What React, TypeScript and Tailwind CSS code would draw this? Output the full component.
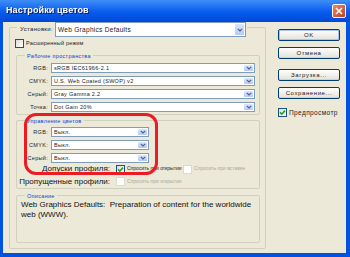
import React from 'react';

const font = "font-['Liberation_Sans','Noto_Sans',sans-serif]";

function Chevron() {
  return (
    <svg width="6" height="4" viewBox="0 0 6 4">
      <path d="M0.8 0.8 L3 3 L5.2 0.8" fill="none" stroke="#4d6185" strokeWidth="1.2" />
    </svg>
  );
}

function Select({ value, h = 'h-[10px]', w = 'flex-1', text = 'text-[5.5px]' }: { value: string; h?: string; w?: string; text?: string }) {
  return (
    <div className={`${w} ${h} flex items-stretch bg-white border border-[#7f9db9]`}>
      <span className={`flex-1 flex items-center pl-[2px] ${text} tracking-[0.3px] text-[#222] whitespace-nowrap overflow-hidden`}>{value}</span>
      <span className="w-[9px] m-px rounded-[1px] bg-gradient-to-b from-[#dce6fd] to-[#b3c9f7] flex items-center justify-center">
        <Chevron />
      </span>
    </div>
  );
}

function Check({ checked = false, disabled = false }: { checked?: boolean; disabled?: boolean }) {
  return (
    <span
      className={`w-[9px] h-[9px] shrink-0 flex items-center justify-center border ${
        disabled ? 'border-[#dcdad0] bg-white' : 'border-[#1c5180] bg-gradient-to-br from-[#dcdcd6] to-white'
      }`}
    >
      {checked && (
        <svg width="7" height="7" viewBox="0 0 7 7">
          <path d="M1 3.4 L2.8 5.2 L6 1.6" fill="none" stroke="#21a121" strokeWidth="1.6" />
        </svg>
      )}
    </span>
  );
}

function Group({ title, children, className = '' }: { title: string; children?: React.ReactNode; className?: string }) {
  return (
    <div className={`border border-[#d0d0bf] rounded-[2px] ${className}`}>
      <div className="-mt-[4px] ml-[8px] w-fit px-[2px] bg-[#ece9d8] h-[8px] leading-[8px] text-[5.5px] tracking-[0.3px] text-[#0046d5]">
        {title}
      </div>
      {children}
    </div>
  );
}

function Row({ label, value, w }: { label: string; value: string; w?: string }) {
  return (
    <div className="flex items-center h-[10px]">
      <span className="w-[32px] text-right text-[5.5px] tracking-[0.3px] text-[#222] pr-[1px]">{label}</span>
      <span className="w-[2px]" />
      <Select value={value} w={w} />
    </div>
  );
}

function Button({ children, primary = false }: { children: React.ReactNode; primary?: boolean }) {
  return (
    <button
      className={`h-[12px] w-[62px] rounded-[2px] border border-[#003c74] bg-gradient-to-b from-white to-[#e3e1d6] text-[6px] tracking-[0.6px] text-[#222] flex items-center justify-center ${
        primary ? 'shadow-[inset_0_0_0_1px_#a9c4f4]' : 'shadow-[inset_0_-1px_0_#d6d0c5]'
      }`}
    >
      {children}
    </button>
  );
}

export default function App() {
  return (
    <div className={`w-[350px] h-[257px] flex flex-col bg-[#0053e1] relative overflow-hidden ${font}`}>
      {/* Title bar */}
      <div className="h-[22px] flex items-center pl-[6px] pr-[4px] bg-gradient-to-b from-[#3e8ef6] via-[#0a5ef0] to-[#0048d6]">
        <span className="text-white font-bold text-[9px] tracking-[0.1px] drop-shadow-[1px_1px_0_#0a1f6e]">Настройки цветов</span>
        <span className="ml-auto w-[14px] h-[14px] rounded-[2px] border border-white bg-gradient-to-br from-[#e9886c] to-[#c5391a] flex items-center justify-center">
          <svg width="8" height="8" viewBox="0 0 8 8">
            <path d="M1 1 L7 7 M7 1 L1 7" stroke="white" strokeWidth="1.6" />
          </svg>
        </span>
      </div>

      {/* Body */}
      <div className="flex-1 ml-[3px] mr-[4px] mb-[4px] bg-[#ece9d8] flex pl-[6px] pt-[5px] pb-[4px]">
        {/* Left column */}
        <div className="w-[257px] border border-[#d0d0bf] rounded-[2px] flex flex-col pl-[6px] pr-[5px] pb-[5px]">
          <div className="-mt-[6px] ml-[1px] mr-[13px] h-[15px] flex items-center bg-[#ece9d8] pl-[3px] pr-[1px]">
            <span className="text-[6px] tracking-[0.3px] text-[#222] w-[35px] whitespace-nowrap">Установки:</span>
            <Select value="Web Graphics Defaults" h="h-[15px]" text="text-[6.5px]" />
          </div>

          <div className="mt-[2px] flex items-center gap-[2px] -ml-[1px]">
            <Check />
            <span className="text-[5.5px] tracking-[0.2px] text-[#222]">Расширенный режим</span>
          </div>

          <Group title="Рабочие пространства" className="mt-[7px] pb-[2px]">
            <div className="mt-[3px] flex flex-col gap-[3px] pr-[4px]">
              <Row label="RGB:" value="sRGB IEC61966-2.1" />
              <Row label="CMYK:" value="U.S. Web Coated (SWOP) v2" />
              <Row label="Серый:" value="Gray Gamma 2.2" />
              <Row label="Точка:" value="Dot Gain 20%" />
            </div>
          </Group>

          <Group title="Управление цветов" className="mt-[5px] pb-[2px]">
            <div className="mt-[2px] flex flex-col gap-[3px]">
              <Row label="RGB:" value="Выкл." w="w-[98px]" />
              <Row label="CMYK:" value="Выкл." w="w-[98px]" />
              <Row label="Серый:" value="Выкл." w="w-[98px]" />
            </div>
            <div className="mt-[1px] h-[10px] flex items-center">
              <span className="w-[93px] flex justify-end text-[8px] text-[#111] whitespace-nowrap">Допуски профиля:</span>
              <span className="w-[6px]" />
              <Check checked />
              <span className="ml-[2px] w-[56px] text-[5px] text-[#222] whitespace-nowrap">Спросить при открытии</span>
              <Check disabled />
              <span className="ml-[2px] text-[5px] text-[#aca899] whitespace-nowrap">Спросить при вставке</span>
            </div>
            <div className="mt-[3px] h-[9px] flex items-center">
              <span className="w-[93px] flex justify-end text-[8px] text-[#111] whitespace-nowrap">Пропущенные профили:</span>
              <span className="w-[6px]" />
              <Check disabled />
              <span className="ml-[2px] text-[5px] text-[#aca899] whitespace-nowrap">Спросить при открытии</span>
            </div>
          </Group>

          <Group title="Описание" className="mt-[6px] flex-1">
            <p className="pl-[4px] text-[8px] leading-[10px] text-[#111] whitespace-nowrap">
              Web Graphics Defaults:&nbsp; Preparation of content for the worldwide
              <br />
              web (WWW).
            </p>
          </Group>
        </div>

        {/* Right column */}
        <div className="ml-[12px] flex flex-col">
          <div className="mt-[2px]"><Button primary>OK</Button></div>
          <div className="mt-[6px]"><Button>Отмена</Button></div>
          <div className="mt-[10px]"><Button>Загрузка...</Button></div>
          <div className="mt-[6px]"><Button>Сохранение...</Button></div>
          <div className="mt-[9px] flex items-center gap-[2px]">
            <Check checked />
            <span className="text-[6.5px] tracking-[0.4px] text-[#222]">Предпросмотр</span>
          </div>
        </div>
      </div>

      {/* Red annotation */}
      <div className="absolute left-[24px] top-[113px] w-[134px] h-[62px] border-[3px] border-[#ec1c24] rounded-[12px] pointer-events-none" />
    </div>
  );
}
